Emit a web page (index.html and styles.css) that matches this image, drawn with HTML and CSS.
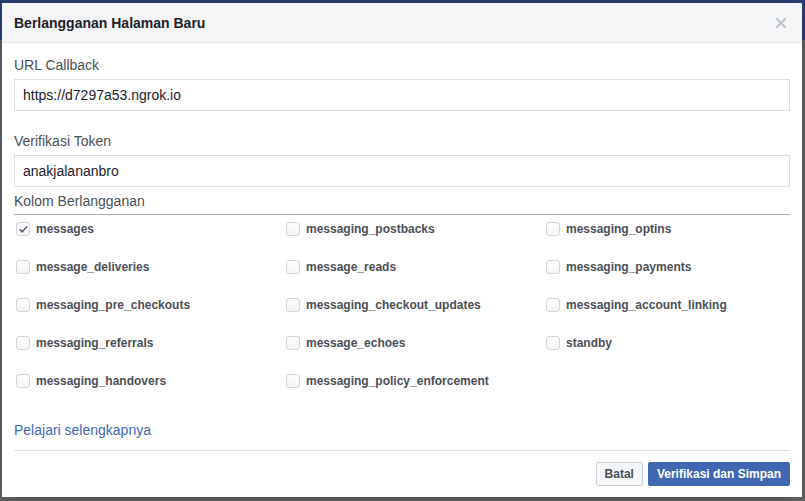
FILE: index.html
```html
<!DOCTYPE html>
<html lang="id">
<head>
<meta charset="utf-8">
<title>Berlangganan Halaman Baru</title>
<link rel="stylesheet" href="styles.css">
</head>
<body>
<div class="modal">
  <div class="modal-header">
    <h1 class="modal-title">Berlangganan Halaman Baru</h1>
    <button class="close" type="button" aria-label="Tutup">
      <svg width="10" height="10" viewBox="0 0 10 10"><path d="M1 1 L9 9 M9 1 L1 9" stroke="#bec3c9" stroke-width="2" stroke-linecap="square" fill="none"/></svg>
    </button>
  </div>
  <div class="modal-body">
    <label class="field-label">URL Callback</label>
    <div class="input">https://d7297a53.ngrok.io</div>
    <label class="field-label second">Verifikasi Token</label>
    <div class="input">anakjalananbro</div>
    <div class="subs-title">Kolom Berlangganan</div>
    <div class="subs-grid">
      <div class="opt"><span class="cb checked"><svg width="11" height="11" viewBox="0 0 11 11"><path d="M2.2 5.8 L4.3 7.8 L8.8 2.8" stroke="#5b6270" stroke-width="1.6" fill="none" stroke-linecap="round" stroke-linejoin="round"/></svg></span>messages</div>
      <div class="opt"><span class="cb"></span>messaging_postbacks</div>
      <div class="opt"><span class="cb"></span>messaging_optins</div>
      <div class="opt"><span class="cb"></span>message_deliveries</div>
      <div class="opt"><span class="cb"></span>message_reads</div>
      <div class="opt"><span class="cb"></span>messaging_payments</div>
      <div class="opt"><span class="cb"></span>messaging_pre_checkouts</div>
      <div class="opt"><span class="cb"></span>messaging_checkout_updates</div>
      <div class="opt"><span class="cb"></span>messaging_account_linking</div>
      <div class="opt"><span class="cb"></span>messaging_referrals</div>
      <div class="opt"><span class="cb"></span>message_echoes</div>
      <div class="opt"><span class="cb"></span>standby</div>
      <div class="opt"><span class="cb"></span>messaging_handovers</div>
      <div class="opt"><span class="cb"></span>messaging_policy_enforcement</div>
    </div>
    <a class="learn" href="#">Pelajari selengkapnya</a>
  </div>
  <div class="modal-footer">
    <button class="btn" type="button">Batal</button>
    <button class="btn primary" type="button">Verifikasi dan Simpan</button>
  </div>
</div>
</body>
</html>
```
FILE: styles.css
```css
* { box-sizing: border-box; }
html, body { height: 100%; }
body {
  margin: 0;
  background: linear-gradient(#2b4379 0, #2b4379 40px, #656769 40px, #656769 100%);
  font-family: "Liberation Sans", Arial, Helvetica, sans-serif;
  overflow: hidden;
}
.modal {
  margin: 3px 0 0 2px;
  width: 800px;
  height: 494px;
  background: #fff;
  display: flex;
  flex-direction: column;
  box-shadow: 0 2px 26px rgba(0,0,0,.3);
}
.modal-header {
  height: 40px;
  background: #f5f6f7;
  border-bottom: 1px solid #e5e5e5;
  padding: 0 12px;
  display: flex;
  align-items: center;
  justify-content: space-between;
}
.modal-title {
  margin: 0;
  font-size: 14px;
  font-weight: bold;
  color: #1d2129;
  line-height: 18px;
}
.close {
  border: 0;
  background: none;
  padding: 0;
  width: 10px;
  height: 10px;
  margin-right: 4px;
  display: flex;
}
.modal-body {
  flex: 1;
  padding: 13px 12px 0;
  display: flex;
  flex-direction: column;
}
.field-label {
  font-size: 14px;
  line-height: 18px;
  color: #4b4f56;
  margin-bottom: 5px;
}
.field-label.second { margin-top: 21px; }
.input {
  height: 32px;
  border: 1px solid #dddfe2;
  padding: 0 8px;
  font-size: 14px;
  line-height: 30px;
  color: #1d2129;
}
.subs-title {
  margin-top: 5px;
  font-size: 14px;
  line-height: 18px;
  color: #4b4f56;
  padding-bottom: 4px;
  border-bottom: 1px solid #a9acb1;
}
.subs-grid {
  margin-top: 5px;
  display: grid;
  grid-template-columns: 270px 260px 1fr;
  row-gap: 20px;
}
.opt {
  display: flex;
  align-items: center;
  height: 18px;
  font-size: 12px;
  font-weight: bold;
  color: #4b4f56;
  padding-left: 2px;
}
.cb {
  width: 14px;
  height: 14px;
  border: 1px solid #d3d6db;
  border-radius: 3px;
  background: linear-gradient(#fdfdfd, #f4f4f5);
  margin-right: 6px;
  display: flex;
  align-items: center;
  justify-content: center;
  flex: none;
}
.learn {
  margin-top: 31px;
  font-size: 14px;
  line-height: 18px;
  color: #4267b2;
  text-decoration: none;
  align-self: flex-start;
}
.modal-footer {
  margin: 0 12px;
  border-top: 1px solid #dddfe2;
  padding: 11px 0 11px;
  display: flex;
  justify-content: flex-end;
  gap: 5px;
}
.btn {
  height: 24px;
  padding: 0 8px;
  border: 1px solid #ccd0d5;
  border-radius: 2px;
  background: #f5f6f7;
  color: #4b4f56;
  font-family: "Liberation Sans", Arial, Helvetica, sans-serif;
  font-size: 12px;
  font-weight: bold;
  line-height: 22px;
}
.btn.primary {
  background: #4267b2;
  border-color: #4267b2;
  color: #fff;
}
```
